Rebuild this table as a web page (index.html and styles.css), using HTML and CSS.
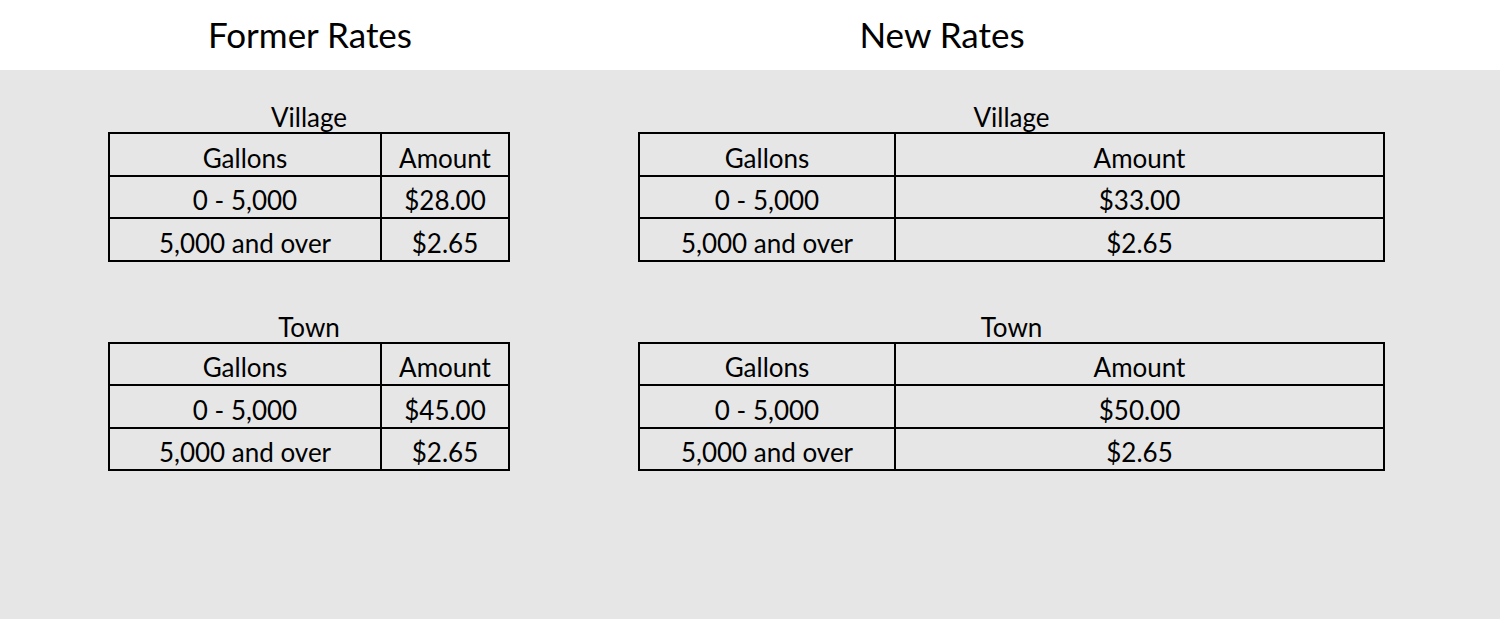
FILE: index.html
```html
<!DOCTYPE html>
<html>
<head>
<meta charset="utf-8">
<link rel="stylesheet" href="styles.css">
</head>
<body>
<header class="titles">
  <h1 class="title title-former">Former Rates</h1>
  <h1 class="title title-new">New Rates</h1>
</header>
<main class="panel">
  <section class="col col-former">
    <div class="block">
      <div class="caption">Village</div>
      <table class="rates">
        <tr><td class="c1">Gallons</td><td>Amount</td></tr>
        <tr><td class="c1">0 - 5,000</td><td>$28.00</td></tr>
        <tr><td class="c1">5,000 and over</td><td>$2.65</td></tr>
      </table>
    </div>
    <div class="block">
      <div class="caption">Town</div>
      <table class="rates">
        <tr><td class="c1">Gallons</td><td>Amount</td></tr>
        <tr><td class="c1">0 - 5,000</td><td>$45.00</td></tr>
        <tr><td class="c1">5,000 and over</td><td>$2.65</td></tr>
      </table>
    </div>
  </section>
  <section class="col col-new">
    <div class="block">
      <div class="caption">Village</div>
      <table class="rates">
        <tr><td class="c1">Gallons</td><td>Amount</td></tr>
        <tr><td class="c1">0 - 5,000</td><td>$33.00</td></tr>
        <tr><td class="c1">5,000 and over</td><td>$2.65</td></tr>
      </table>
    </div>
    <div class="block">
      <div class="caption">Town</div>
      <table class="rates">
        <tr><td class="c1">Gallons</td><td>Amount</td></tr>
        <tr><td class="c1">0 - 5,000</td><td>$50.00</td></tr>
        <tr><td class="c1">5,000 and over</td><td>$2.65</td></tr>
      </table>
    </div>
  </section>
</main>
</body>
</html>
```
FILE: styles.css
```css
html, body {
  margin: 0;
  padding: 0;
}
body {
  width: 1500px;
  height: 619px;
  overflow: hidden;
  font-family: Lato, "Open Sans", sans-serif;
  color: #000;
  background: #fff;
}
.titles {
  height: 70px;
  display: grid;
  grid-template-columns: 620px 644px;
  align-items: center;
  background: #fff;
}
.title {
  margin: 0;
  font-weight: 400;
  font-size: 35px;
  line-height: 40px;
  text-align: center;
  padding-bottom: 2px;
}
.panel {
  height: 549px;
  background: #e6e6e6;
  display: grid;
  grid-template-columns: 402px 747px;
  column-gap: 128px;
  padding-left: 108px;
  padding-top: 32px;
  box-sizing: border-box;
  align-items: start;
}
.col {
  display: flex;
  flex-direction: column;
  gap: 50px;
}
.caption {
  height: 30px;
  line-height: 30px;
  font-size: 26px;
  text-align: center;
}
.rates {
  width: 100%;
  border-collapse: collapse;
  table-layout: fixed;
  font-size: 26px;
}
.rates td {
  border: 2px solid #000;
  height: 42.5px;
  padding: 7px 0 0 0;
  box-sizing: border-box;
  text-align: center;
  vertical-align: middle;
  line-height: 30px;
}
.col-former .c1 { width: 272px; }
.col-new .c1 { width: 256px; }
```
